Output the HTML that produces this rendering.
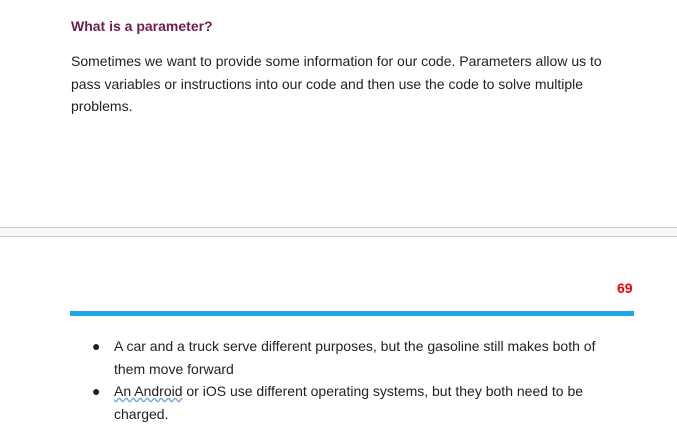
<html><head><style>
body{margin:0;width:677px;height:430px;background:#fff;position:relative;overflow:hidden;font-family:"Liberation Sans",sans-serif;color:#222;}
.a{position:absolute;}
</style></head><body>
<div class="a" style="left:71px;top:18px;font-size:14px;font-weight:bold;color:#6d1e4c">What is a parameter?</div>
<div class="a" style="left:71px;top:50px;width:560px;font-size:14px;line-height:22.5px">Sometimes we want to provide some information for our code. Parameters allow us to pass variables or instructions into our code and then use the code to solve multiple problems.</div>
<div class="a" style="left:0;top:227px;width:677px;height:8px;background:#f8f9fa;border-top:1px solid #ccc;border-bottom:1px solid #ccc"></div>
<div class="a" style="left:617px;top:280px;font-size:14px;font-weight:bold;color:#e00">69</div>
<div class="a" style="left:70px;top:311px;width:564px;height:5px;background:#1ea7e8"></div>
<div class="a" style="left:92px;top:335px;font-size:14px;line-height:22.5px">●</div>
<div class="a" style="left:114px;top:335px;width:510px;font-size:14px;line-height:22.5px">A car and a truck serve different purposes, but the gasoline still makes both of<br>them move forward</div>
<div class="a" style="left:92px;top:380px;font-size:14px;line-height:22.5px">●</div>
<div class="a" style="left:114px;top:380px;width:520px;font-size:14px;line-height:22.5px"><span style="text-decoration:underline wavy #6fa8dc">An Android</span> or iOS use different operating systems, but they both need to be<br>charged.</div>
</body></html>
